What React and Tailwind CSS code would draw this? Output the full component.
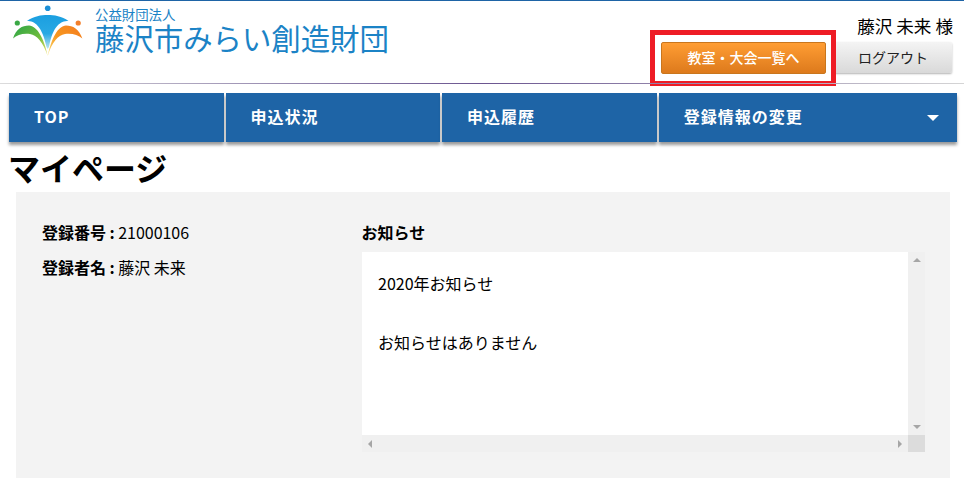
const font = { fontFamily: '"Noto Sans CJK JP", "Noto Sans", sans-serif' };

function Logo() {
  return (
    <svg width="95" height="60" viewBox="0 0 95 60" className="shrink-0">
      <defs>
        <linearGradient id="b" x1="0" y1="0" x2="0" y2="1">
          <stop offset="0" stopColor="#1b9fe0" />
          <stop offset="0.55" stopColor="#29a9e4" />
          <stop offset="1" stopColor="#bfe6f0" />
        </linearGradient>
        <linearGradient id="g" x1="0" y1="0" x2="1" y2="1">
          <stop offset="0" stopColor="#2ca548" />
          <stop offset="0.55" stopColor="#6dbb3c" />
          <stop offset="1" stopColor="#f4e36a" />
        </linearGradient>
        <linearGradient id="o" x1="1" y1="0" x2="0" y2="1">
          <stop offset="0" stopColor="#f47b20" />
          <stop offset="0.55" stopColor="#f7981f" />
          <stop offset="1" stopColor="#f9e27a" />
        </linearGradient>
      </defs>
      <circle cx="47.7" cy="7.3" r="2.8" fill="#1b8fd6" />
      <circle cx="17.3" cy="22" r="2.6" fill="#3aa845" />
      <circle cx="78.2" cy="22" r="2.6" fill="#f37f2a" />
      <path d="M27 20 C34 15 41 14 47.7 14 C54 14 62 15 68.5 20 C60 20 53 25 49 46 L47.7 48 L46.5 46 C42 25 35 20 27 20 Z" fill="url(#b)" />
      <path d="M13 37.5 C16 28 22 24.5 29 24.5 C37 25 44 37 47.7 55 C43 41 37 34 30 33 C23 32 17 34 13 37.5 Z" fill="url(#g)" />
      <path d="M82.4 37.5 C79 28 73 24.5 66 24.5 C58 25 51.5 37 47.7 55 C52 41 58 34 65 33 C72 32 78 34 82.4 37.5 Z" fill="url(#o)" />
    </svg>
  );
}

function NavItem({ className, children, caret }) {
  return (
    <div className={`relative h-[49px] bg-[#1e64a6] flex items-center pl-[25px] pb-[4px] text-white font-bold text-[16px] tracking-[1px] shadow-[0_3px_3px_rgba(0,0,0,0.4)] ${className}`}>
      {children}
      {caret && (
        <span className="absolute right-[18px] top-[22px] w-0 h-0 border-l-[6px] border-r-[6px] border-t-[6px] border-l-transparent border-r-transparent border-t-white" />
      )}
    </div>
  );
}

export default function App() {
  return (
    <div style={font} className="w-[964px] h-[478px] overflow-hidden bg-white text-black">
      <header className="h-[84px] border-t border-[#1e64a6] relative flex justify-between">
        <div className="flex items-start">
          <Logo />
          <div className="pt-[6px] text-[#1b83c6] leading-none">
            <div className="text-[13.4px] h-[15px] leading-[15px] whitespace-nowrap">公益財団法人</div>
            <div className="text-[29.4px] leading-[30px] whitespace-nowrap">藤沢市みらい創造財団</div>
          </div>
        </div>
        <div className="flex flex-col items-end pr-[12px]">
          <div className="text-[17.6px] leading-[24px] mt-[13px] mr-[-1px] whitespace-nowrap">藤沢 未来 様</div>
          <div className="flex items-start gap-[8px] mt-[4px]">
            <div className="relative">
              <button className="w-[165px] h-[32px] pb-[1px] rounded-[2px] border border-[#c9761d] bg-gradient-to-b from-[#ff9d33] to-[#dd7a1c] text-white text-[14px] font-medium">教室・大会一覧へ</button>
              <div className="absolute left-[-11px] top-[-12px] w-[186px] h-[56px] border-[5px] border-[#ee1c25]" />
            </div>
            <button className="w-[118px] h-[31px] rounded-[2px] bg-gradient-to-b from-[#f4f4f4] to-[#d9d9d9] text-[14px] text-[#222] shadow-[0_1px_2px_rgba(0,0,0,0.3)]">ログアウト</button>
          </div>
        </div>
        <div className="absolute left-0 right-0 bottom-0 h-px bg-gradient-to-r from-[#dcdcdc] via-[#6b5590] to-[#d5d5d5]" />
      </header>

      <nav className="flex mt-[9px] ml-[9px] w-[948px]">
        <NavItem className="w-[215px]">TOP</NavItem>
        <NavItem className="w-[215px] ml-[2px]">申込状況</NavItem>
        <NavItem className="w-[215px] ml-[2px]">申込履歴</NavItem>
        <NavItem className="w-[299px] ml-[2px]" caret>登録情報の変更</NavItem>
      </nav>

      <h1 className="ml-[8px] mt-[4px] text-[32px] font-bold leading-[43px] h-[46px]">マイページ</h1>

      <main className="mx-[16px] w-[934px] h-[286px] bg-[#f3f3f3] flex pl-[26px] pt-[28px]">
        <div className="w-[320px] text-[16px] leading-[24px] shrink-0 tracking-[-0.03px]">
          <div><span className="font-bold">登録番号 : </span>21000106</div>
          <div className="mt-[11px]"><span className="font-bold">登録者名 : </span>藤沢 未来</div>
        </div>
        <div className="w-[563px]">
          <div className="font-bold text-[16px] leading-[24px] h-[32px] ml-[-0.5px]">お知らせ</div>
          <div className="w-[563px] h-[200px] grid grid-cols-[546px_17px] grid-rows-[183px_17px]">
            <div className="bg-white pl-[16px] pt-[19px] text-[16px] leading-[24px]">
              <p>2020年お知らせ</p>
              <p className="mt-[35px]">お知らせはありません</p>
            </div>
            <div className="bg-[#f0f0f0] flex flex-col items-center justify-between py-[6px]">
              <span className="w-0 h-0 border-l-[4px] border-r-[4px] border-b-[4px] border-l-transparent border-r-transparent border-b-[#a6a6a6]" />
              <span className="w-0 h-0 border-l-[4px] border-r-[4px] border-t-[4px] border-l-transparent border-r-transparent border-t-[#a6a6a6]" />
            </div>
            <div className="bg-[#f0f0f0] flex items-center justify-between px-[6px]">
              <span className="w-0 h-0 border-t-[4px] border-b-[4px] border-r-[4px] border-t-transparent border-b-transparent border-r-[#a6a6a6]" />
              <span className="w-0 h-0 border-t-[4px] border-b-[4px] border-l-[4px] border-t-transparent border-b-transparent border-l-[#a6a6a6]" />
            </div>
            <div className="bg-[#dcdcdc]" />
          </div>
        </div>
      </main>
    </div>
  );
}
